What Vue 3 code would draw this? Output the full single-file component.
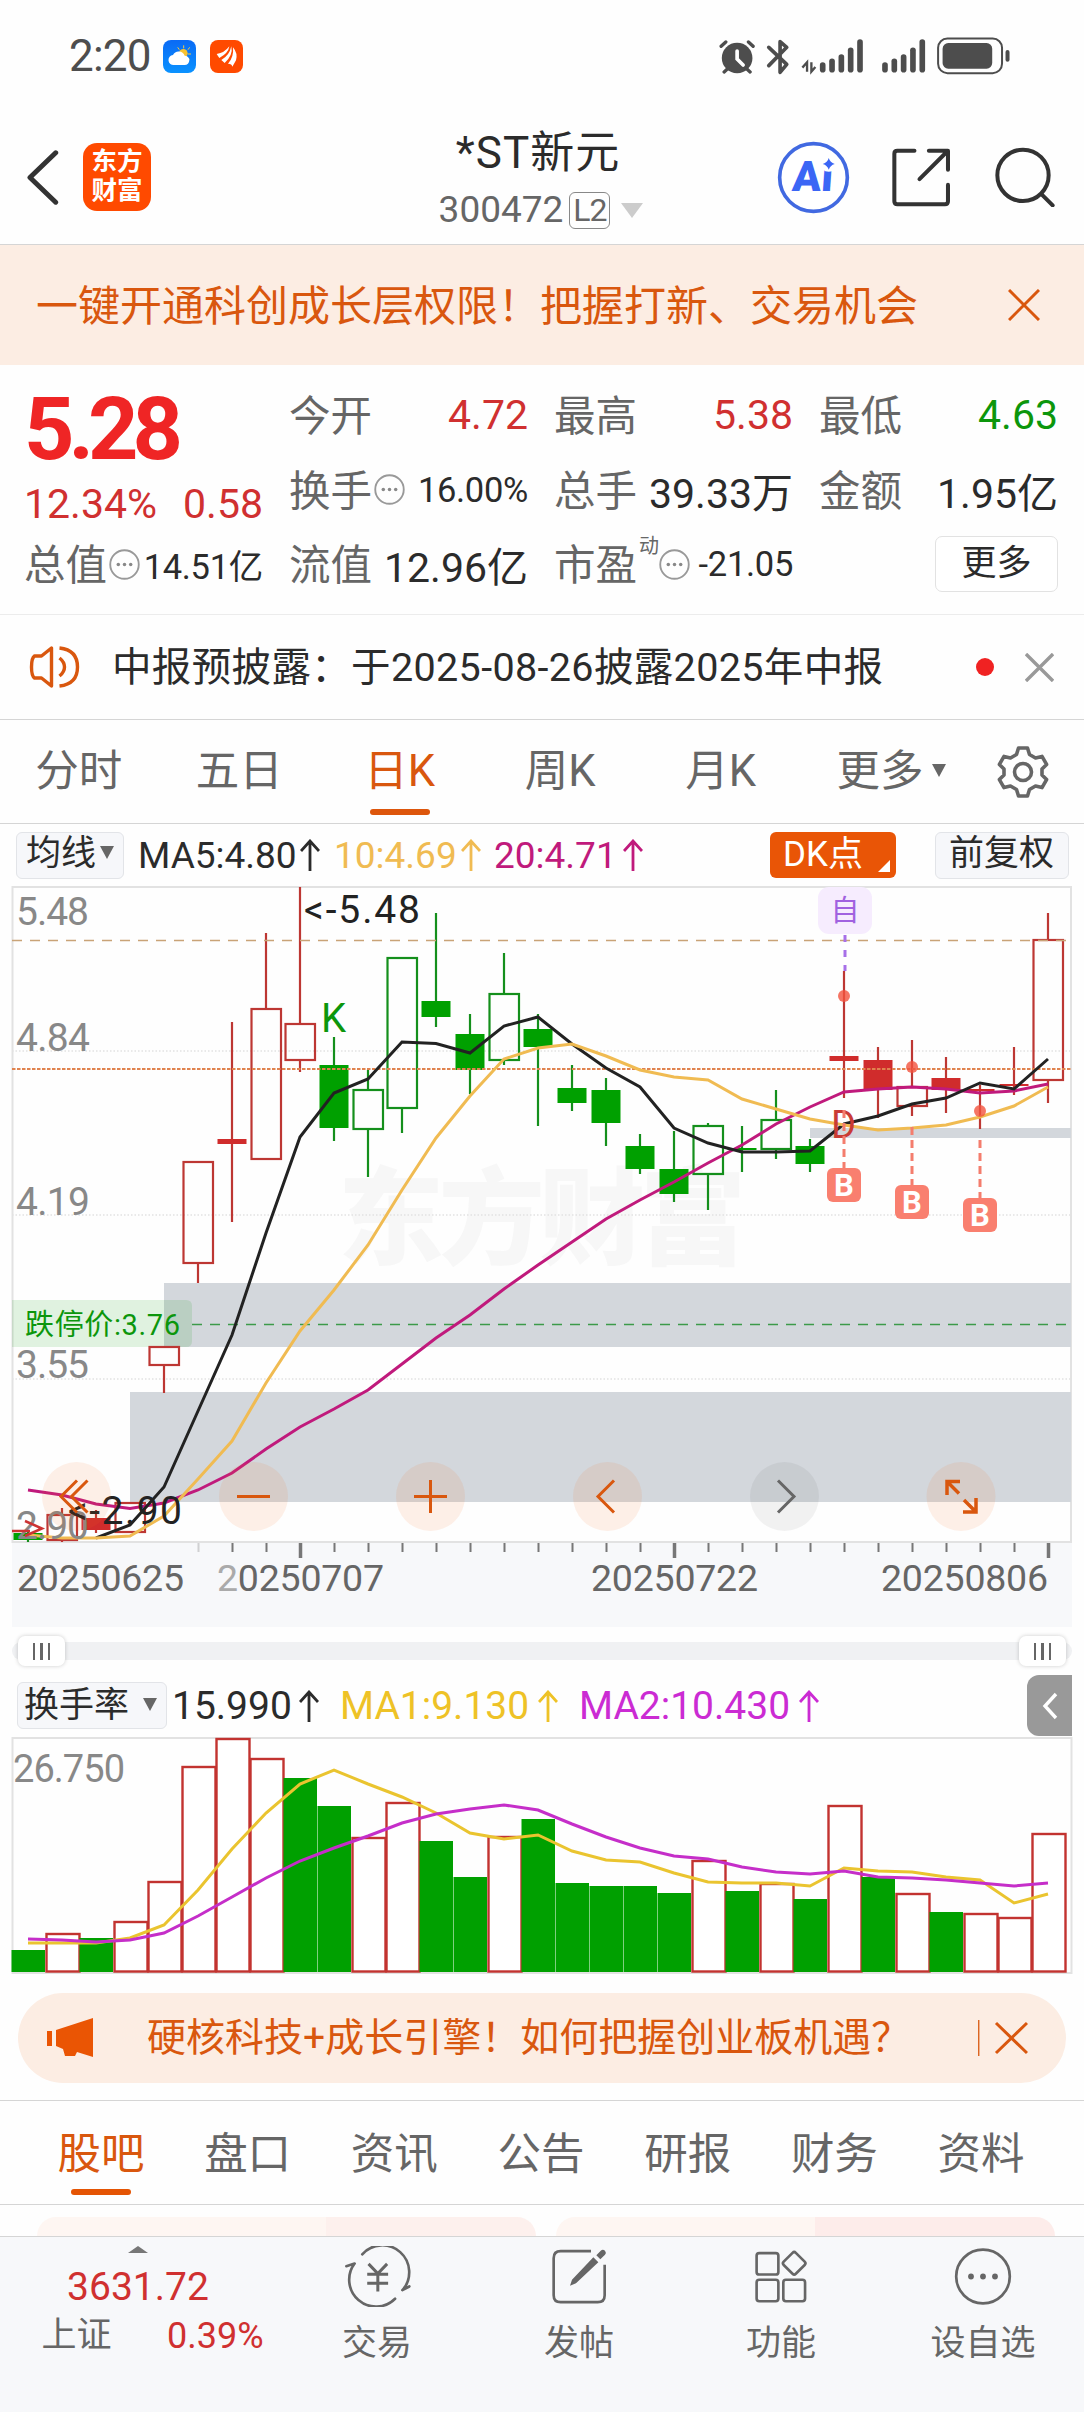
<template>
  <div class="page">
    <!-- Status bar -->
    <div class="status-bar">
      <span class="clock">2:20</span>
      <svg class="app-icon" viewBox="0 0 99 99">
        <defs>
          <linearGradient id="sky" x1="0" y1="0" x2="0" y2="1">
            <stop offset="0" stop-color="#0a6af5" />
            <stop offset="1" stop-color="#0a92ff" />
          </linearGradient>
        </defs>
        <rect width="99" height="99" rx="24" fill="url(#sky)" />
        <path d="M62 16v9M44 22l5 7M80 22l-5 7M84 42h-9M80 58l-5-4" stroke="#f5c842" stroke-width="3" />
        <circle cx="61" cy="40" r="13" fill="#f9c22e" />
        <path d="M33 75a15 15 0 0 1-3-30a19 19 0 0 1 35 2a14 14 0 0 1 0 28z" fill="#fff" />
      </svg>
      <svg class="app-icon second" viewBox="0 0 99 99">
        <rect width="99" height="99" rx="24" fill="#ff4a00" />
        <path d="M20 42Q43 39 58 19Q55 40 28 54ZM34 60Q58 47 64 19Q70 45 44 69ZM54 71Q72 52 69 22Q84 40 78 61L67 80Q66 71 54 71Z" fill="#fff" />
      </svg>
      <svg class="status-icons" viewBox="57 20 873 115">
        <g fill="#4d4d4d">
          <circle cx="111" cy="83" r="46" />
          <path d="M111 62v24l18 18" stroke="#fff" stroke-width="11" fill="none" stroke-linecap="round" />
          <path d="M63 48l14-13M159 48l-14-13M72 125l12-11M150 125l-12-11" stroke="#4d4d4d" stroke-width="10" stroke-linecap="round" />
          <path d="M206 51l54 51-20 24V34l20 17-54 55" stroke="#4d4d4d" stroke-width="11" fill="none" stroke-linecap="round" stroke-linejoin="round" />
          <path d="M321 124V96l-14 16M334 96v28l12-14" stroke="#4d4d4d" stroke-width="7" fill="none" />
        </g>
        <g stroke="#4d4d4d" stroke-width="17" stroke-linecap="round">
          <line v-for="(y, i) in signal" :key="'a' + i" :x1="368 + i * 28" :x2="368 + i * 28" :y1="y" y2="118" />
          <line v-for="(y, i) in signal" :key="'b' + i" :x1="555 + i * 28" :x2="555 + i * 28" :y1="y" y2="118" />
        </g>
        <rect x="714.5" y="24.5" width="192" height="104" rx="28" fill="none" stroke="#4d4d4d" stroke-width="6" />
        <rect x="728" y="38" width="149" height="77" rx="17" fill="#4d4d4d" />
        <rect x="917" y="59" width="12" height="35" rx="6" fill="#4d4d4d" />
      </svg>
    </div>

    <!-- Header -->
    <header class="header">
      <svg class="back" viewBox="0 0 100 166">
        <path d="M90 8L12 83l78 75" fill="none" stroke="#333" stroke-width="15" stroke-linecap="round" stroke-linejoin="round" />
      </svg>
      <div class="logo"><span>东方</span><span>财富</span></div>
      <div class="title">
        <div class="name">*ST新元</div>
        <div class="code">300472<span class="level">L2</span><i class="tri-down light"></i></div>
      </div>
      <svg class="ai" viewBox="228 332 220 220">
        <circle cx="338" cy="442" r="102" fill="#fff" stroke="#4169e1" stroke-width="11" />
        <text x="0" y="0" font-size="127" class="ai-text" textLength="122" lengthAdjust="spacingAndGlyphs" transform="translate(272 482) skewX(-4)">Ai</text>
        <circle cx="384" cy="398" r="27" fill="#fff" />
        <path d="M384 383q4 14 18 18q-14 4-18 18q-4-14-18-18q14-4 18-18z" fill="#3b66f5" />
      </svg>
      <svg class="share" viewBox="574 354 176 176">
        <path d="M641 362H590q-9 0-9 9V513q0 9 9 9H732q9 0 9-9V464M684 362H741V419M737 366L656 447" fill="none" stroke="#333" stroke-width="12" stroke-linecap="round" stroke-linejoin="round" />
      </svg>
      <svg class="search" viewBox="884 348 180 180">
        <circle cx="968" cy="433" r="77" fill="none" stroke="#333" stroke-width="12" />
        <path d="M1024 490l33 33" stroke="#333" stroke-width="12" stroke-linecap="round" />
      </svg>
    </header>

    <!-- Promo banner -->
    <div class="banner">
      <span>一键开通科创成长层权限！把握打新、交易机会</span>
      <svg viewBox="0 0 32 32"><path d="M1 1l30 30M31 1L1 31" stroke="#d9570e" stroke-width="3" /></svg>
    </div>

    <!-- Quote -->
    <section class="quote">
      <div class="price-box">
        <div class="price">5.28</div>
        <div class="change"><span>12.34%</span><span>0.58</span></div>
      </div>
      <div v-for="item in quotes" :key="item.label" class="cell">
        <span class="label">{{ item.label }}<sup v-if="item.sup">{{ item.sup }}</sup></span>
        <svg v-if="item.info" class="info" viewBox="0 0 30 30">
          <circle cx="15" cy="15" r="13.8" fill="none" stroke="#999" stroke-width="1.8" />
          <circle v-for="x in [9, 15, 21]" :key="x" :cx="x" cy="15" r="1.7" fill="#888" />
        </svg>
        <span class="value" :class="[item.color, { small: item.info }]">{{ item.value }}</span>
      </div>
      <div class="cell"><button class="more-button">更多</button></div>
    </section>

    <!-- Notice -->
    <div class="notice">
      <svg class="horn" viewBox="0 0 50 44">
        <g fill="none" stroke="#d9570e" stroke-width="3.400">
          <path d="M22 3v38L12 33H5q-3-2-3-11t3-11h7z" stroke-linejoin="round" />
          <path d="M30 13q5 4 5 9t-5 9M30 3q18 2 18 19T30 41" />
        </g>
      </svg>
      <span class="notice-text">中报预披露：于2025-08-26披露2025年中报</span>
      <i class="dot"></i>
      <svg class="close" viewBox="0 0 30 30"><path d="M1 1l28 28M29 1L1 29" stroke="#999" stroke-width="3.500" /></svg>
    </div>

    <!-- Period tabs -->
    <nav class="period-tabs">
      <span v-for="tab in periods" :key="tab" :class="{ active: tab === '日K' }">{{ tab }}</span>
      <span class="more">更多<i class="tri-down"></i></span>
      <svg class="gear" viewBox="0 0 52 52">
        <g fill="none" stroke="#666" stroke-width="3.6" stroke-linejoin="round">
          <path d="M21.500 2h9l2 6.500 6 3.500 6.500-1.600 4.600 8-4.600 4.600v6l4.600 4.600-4.600 8-6.500-1.600-6 3.500-2 6.500h-9l-2-6.500-6-3.500-6.500 1.600-4.600-8L7 29v-6l-4.600-4.600 4.600-8 6.500 1.600 6-3.500z" />
          <circle cx="26" cy="26" r="8.500" />
        </g>
      </svg>
    </nav>

    <!-- Moving averages -->
    <div class="ma-row">
      <span class="chip">均线<i class="tri-down"></i></span>
      <span class="ma black">MA5:4.80<Arrow /></span>
      <span class="ma yellow">10:4.69<Arrow /></span>
      <span class="ma pink">20:4.71<Arrow /></span>
      <span class="chip dk">DK点<i></i></span>
      <span class="chip adjust">前复权</span>
    </div>

    <!-- Candlestick chart -->
    <svg class="chart" viewBox="0 886 1084 742" width="1084" height="742">
      <rect x="12" y="1543" width="1060" height="84" fill="#f7f8fa" />
      <g class="watermark"><text x="338" y="1256" textLength="408">东方财富</text></g>
      <g stroke="#e2e2e2" stroke-width="1.500" stroke-dasharray="1.500 2">
        <line v-for="y in [1051, 1215, 1379]" :key="y" x1="12" x2="1071" :y1="y" :y2="y" />
      </g>
      <path d="M12.500 1542V887H1071V1542Z" fill="none" stroke="#e2e2e2" stroke-width="2" />
      <g fill="#d3d7dc">
        <rect x="164" y="1283" width="907" height="64" />
        <rect x="130" y="1392" width="941" height="110" />
        <rect x="810" y="1128" width="261" height="10" />
      </g>
      <line x1="192" x2="1071" y1="1324.500" y2="1324.500" stroke="#3c9a4a" stroke-width="1.500" stroke-dasharray="10 8" />
      <path d="M12 1300H186q6 0 6 6V1341q0 6-6 6H12z" fill="#0ca00c" fill-opacity=".12" />
      <text x="25" y="1335" font-size="29" fill="#0c960c" textLength="155">跌停价:3.76</text>

      <g v-for="(c, i) in candles" :key="'c' + i" :stroke="candleColor(c)" stroke-width="2.200">
        <template v-if="c[0] === 'R' || c[0] === 'G'">
          <line :x1="cx(i)" :x2="cx(i)" :y1="c[3]" :y2="c[4]" />
          <rect :x="cx(i) - 14.5" :y="c[1]" width="29" :height="c[2] - c[1]" :fill="c[0] === 'R' ? '#d02c2c' : '#00a000'" stroke="none" />
        </template>
        <template v-else>
          <path :d="`M${cx(i)} ${c[3]}V${c[1]}M${cx(i)} ${c[2]}V${c[4]}`" />
          <rect :x="cx(i) - 14.5" :y="c[1] + 1" width="29.5" :height="Math.max(c[2] - c[1] - 2, 0.1)" fill="none" />
        </template>
      </g>

      <line x1="12" x2="1071" y1="940.500" y2="940.500" stroke="#c9a377" stroke-width="1.300" stroke-dasharray="10 8" />
      <line x1="12" x2="1071" y1="1069" y2="1069" stroke="#e0834f" stroke-width="1.800" stroke-dasharray="3.500 1.500" />

      <g fill="none" stroke-width="3">
        <polyline :points="points(ma20)" stroke="#c01a7c" />
        <polyline :points="points(ma5, 2)" stroke="#222" />
        <polyline :points="points(ma10)" stroke="#f0bb52" />
      </g>

      <g class="axis">
        <text x="16" y="925" textLength="73">5.48</text>
        <text x="16" y="1051" textLength="74">4.84</text>
        <text x="16" y="1215" textLength="74">4.19</text>
        <text x="16" y="1378" textLength="73">3.55</text>
        <text x="16" y="1539" textLength="73">2.90</text>
      </g>
      <text x="304" y="923" font-size="39" fill="#222" textLength="116">&lt;-5.48</text>
      <text x="68" y="1524" font-size="39" fill="#222" textLength="114">&lt;-2.90</text>
      <path d="M25 1521l17 7.500-17 7.500M12 1531h18" fill="none" stroke="#c33" stroke-width="2.500" />
      <text x="321" y="1031.500" font-size="40" fill="#0c960c">K</text>
      <text x="831" y="1138" font-size="38" fill="#c93b35">D</text>

      <g v-for="m in marks" :key="m.x">
        <circle :cx="m.x" :cy="m.dot" r="6" fill="#f2523d" fill-opacity=".8" />
        <line :x1="m.x" :x2="m.x" :y1="m.line" :y2="m.box" stroke="#f47d6d" stroke-width="3" stroke-dasharray="8 5" />
        <rect :x="m.x - 17" :y="m.box" width="34" height="34" rx="6" fill="#f97f6f" />
        <text :x="m.x" :y="m.box + 28" font-size="31" font-weight="700" fill="#fff" text-anchor="middle">B</text>
      </g>

      <rect x="818" y="887" width="54" height="47" rx="11" fill="#f6ecfe" />
      <text x="845" y="921" font-size="29" fill="#a162e0" text-anchor="middle">自</text>
      <line x1="845" x2="845" y1="935" y2="971" stroke="#a770e8" stroke-width="3" stroke-dasharray="7 8" />

      <!-- Floating chart controls -->
      <circle v-for="(x, i) in controls" :key="x" :cx="x" cy="1496.500" r="34.500" :fill="i === 4 ? '#000' : '#f26a1b'" :fill-opacity="i === 4 ? 0.05 : 0.1" />
      <g fill="none" stroke="#d9570e" stroke-width="3">
        <path d="M77 1480.500l-16 16 16 16M87.500 1480.500l-16 16 16 16" />
        <path d="M237 1496.500h33M414 1496.500h33M430.500 1480v33" />
        <path d="M614 1480.500l-16 16 16 16" />
        <path d="M778 1480.500l16 16-16 16" stroke="#666" />
        <path d="M947 1495v-13.500h13M947 1481.500l12 12M963 1512h13V1498M976 1512l-12-12" stroke-width="3.500" />
      </g>

      <g stroke="#777">
        <line v-for="i in 26" :key="i" :x1="cx(i + 4) + 0.5" :x2="cx(i + 4) + 0.5" y1="1543" :y2="major(i + 4) ? 1558 : 1552" :stroke-width="major(i + 4) ? 3.5 : 2" :opacity="i === 1 ? 0.3 : 1" />
      </g>
      <g class="dates">
        <text x="17" y="1591" textLength="167">20250625</text>
        <text x="217" y="1591" textLength="167"><tspan fill="#aaa">2</tspan>0250707</text>
        <text x="591" y="1591" textLength="167">20250722</text>
        <text x="881" y="1591" textLength="167">20250806</text>
      </g>
    </svg>

    <!-- Range slider -->
    <div class="slider">
      <div class="track">
        <span class="handle"><i></i><i></i><i></i></span>
        <span class="handle"><i></i><i></i><i></i></span>
      </div>
    </div>

    <!-- Turnover -->
    <div class="volume-row">
      <span class="chip turnover">换手率<i class="tri-down"></i></span>
      <span class="ma black">15.990<Arrow /></span>
      <span class="ma gold">MA1:9.130<Arrow /></span>
      <span class="ma purple">MA2:10.430<Arrow /></span>
      <span class="collapse">
        <svg viewBox="0 0 16 28"><path d="M14 2L3 14l11 12" fill="none" stroke="#fff" stroke-width="3.400" /></svg>
      </span>
    </div>
    <svg class="volume" viewBox="0 1737 1084 238" width="1084" height="238">
      <rect x="12.500" y="1738" width="1059" height="235" fill="none" stroke="#e2e2e2" stroke-width="2" />
      <template v-for="(v, i) in volumes" :key="'v' + i">
        <rect v-if="v[0] === 'g'" :x="11.500 + i * 34" :y="v[1]" width="33.500" :height="1972 - v[1]" fill="#00a000" />
        <rect v-else :x="12.500 + i * 34" :y="v[1] + 1" width="33" :height="1970.500 - v[1]" fill="#fff" stroke="#c23330" stroke-width="2.400" />
      </template>
      <text x="13" y="1782" font-size="38" fill="#888" textLength="112">26.750</text>
      <g fill="none" stroke-width="3">
        <polyline :points="points(vol1)" stroke="#eac42f" />
        <polyline :points="points(vol2)" stroke="#c52ec9" />
      </g>
    </svg>

    <!-- Promo pill -->
    <div class="promo">
      <svg class="megaphone" viewBox="0 0 48 40">
        <path d="M0 13h5v15H0zM9 12L46 0v39l-16-5-2 4H18l-2-7-7-3z" fill="#ea5504" />
      </svg>
      <span class="promo-text">硬核科技+成长引擎！如何把握创业板机遇？</span>
      <svg class="promo-close" viewBox="0 0 50 36">
        <path d="M.75 0v36" stroke="#d9570e" stroke-width="1.300" />
        <path d="M18 3l31 30M49 3L18 33" stroke="#d9570e" stroke-width="3" />
      </svg>
    </div>

    <!-- Info tabs -->
    <nav class="info-tabs">
      <span v-for="tab in infoTabs" :key="tab" :class="{ active: tab === '股吧' }">{{ tab }}</span>
    </nav>
    <div class="cards"><div></div><div></div></div>

    <!-- Bottom bar -->
    <footer class="bottom-bar">
      <div class="index">
        <i class="tri-up"></i>
        <div class="index-value">3631.72</div>
        <div class="index-change"><span>上证</span><b>0.39%</b></div>
      </div>
      <div class="action">
        <svg viewBox="38 46 202 182" width="67" height="61">
          <g fill="none" stroke="#666" stroke-width="8" stroke-linecap="round">
            <path d="M93 70A81 81 0 0 1 214 178L235 167M192 204A81 81 0 0 1 70 98L45 106" stroke-linejoin="round" />
            <path d="M112 99l28 29 28-29M108 130h63M108 157h63M140 129v53" stroke-linecap="butt" stroke-width="9" />
          </g>
        </svg>
        <span>交易</span>
      </div>
      <div class="action">
        <svg viewBox="660 46 174 182" width="58" height="61">
          <path d="M783 61H692q-21 0-21 21V193q0 21 21 21H803q21 0 21-21V102" fill="none" stroke="#666" stroke-width="8" />
          <path d="M790 79l15 15-67 63-18 8 6-18zM799 73l14-14q6-5 12 1 5 6 0 12l-14 13z" fill="#666" />
        </svg>
        <span>发帖</span>
      </div>
      <div class="action">
        <svg viewBox="1266 46 176 182" width="58" height="61">
          <g fill="none" stroke="#666" stroke-width="8">
            <rect x="1280" y="66" width="66" height="65" rx="8" />
            <rect x="1280" y="147" width="66" height="65" rx="8" />
            <rect x="1361" y="147" width="66" height="65" rx="8" />
            <rect x="1368" y="71" width="52" height="52" rx="7" transform="rotate(45 1394 97)" />
          </g>
        </svg>
        <span>功能</span>
      </div>
      <div class="action">
        <svg viewBox="0 0 60 61" width="60" height="61">
          <circle cx="30" cy="30.500" r="26.800" fill="none" stroke="#666" stroke-width="2.700" />
          <circle v-for="x in [18, 30, 42]" :key="x" :cx="x" cy="30.500" r="2.900" fill="#666" />
        </svg>
        <span>设自选</span>
      </div>
    </footer>
  </div>
</template>

<script setup>
import { h } from 'vue'

// Thin up arrow drawn after each average
const Arrow = () =>
  h('svg', { class: 'arrow', viewBox: '0 0 20 32', width: 20, height: 32 }, [
    h('path', { d: 'M10 32V2M1 12L10 2L19 12', fill: 'none', stroke: 'currentColor', 'stroke-width': 2.8 })
  ])

const signal = [104, 93, 80, 60, 35]

const quotes = [
  { label: '今开', value: '4.72', color: 'red' },
  { label: '最高', value: '5.38', color: 'red' },
  { label: '最低', value: '4.63', color: 'green' },
  { label: '换手', value: '16.00%', info: true },
  { label: '总手', value: '39.33万' },
  { label: '金额', value: '1.95亿' },
  { label: '总值', value: '14.51亿', info: true },
  { label: '流值', value: '12.96亿' },
  { label: '市盈', value: '-21.05', info: true, sup: '动' }
]

const periods = ['分时', '五日', '日K', '周K', '月K']
const infoTabs = ['股吧', '盘口', '资讯', '公告', '研报', '财务', '资料']
const controls = [76.5, 253.5, 430.5, 607.5, 784.5, 961]

// [type, body top, body bottom, wick top, wick bottom]
// upper case = filled, lower case = hollow
const candles = [
  ['G', 1533, 1540, 1530, 1542],
  ['r', 1514, 1541, 1508, 1542],
  ['R', 1518, 1530, 1510, 1533],
  ['r', 1502, 1533, 1502, 1533],
  ['r', 1346, 1366, 1346, 1393],
  ['r', 1161, 1264, 1161, 1283],
  ['R', 1139, 1144, 1022, 1222],
  ['r', 1008, 1160, 933, 1160],
  ['r', 1023, 1061, 887, 1072],
  ['G', 1065, 1128, 1037, 1141],
  ['g', 1089, 1130, 1070, 1177],
  ['g', 957, 1109, 957, 1133],
  ['G', 1001, 1017, 913, 1027],
  ['G', 1034, 1070, 1014, 1094],
  ['g', 993, 1061, 953, 1065],
  ['G', 1029, 1047, 1014, 1126],
  ['G', 1088, 1103, 1065, 1111],
  ['G', 1090, 1123, 1078, 1146],
  ['G', 1146, 1169, 1134, 1174],
  ['G', 1169, 1194, 1131, 1202],
  ['g', 1125, 1175, 1123, 1210],
  ['G', 1148, 1150, 1126, 1172],
  ['g', 1119, 1150, 1090, 1159],
  ['G', 1146, 1164, 1139, 1172],
  ['R', 1056, 1061, 971, 1098],
  ['R', 1060, 1090, 1047, 1118],
  ['r', 1086, 1107, 1040, 1116],
  ['R', 1078, 1090, 1057, 1113],
  ['R', 1089, 1091, 1085, 1129],
  ['R', 1084, 1086, 1047, 1095],
  ['r', 939, 1081, 913, 1103]
]

const ma5 = [1538, 1525, 1487, 1411, 1335, 1233, 1137, 1093, 1079, 1042, 1043.500, 1053, 1026, 1017, 1044, 1068, 1087, 1128, 1143, 1152, 1152, 1151, 1124, 1116, 1104, 1098, 1083, 1089, 1059]
const ma10 = [1535, 1538, 1538, 1536, 1516, 1479, 1441, 1383, 1331, 1290, 1245, 1190, 1138, 1096, 1059, 1048, 1044, 1056, 1070, 1077, 1080, 1099, 1109, 1119, 1125, 1130, 1128, 1125, 1117, 1106, 1087]
const ma20 = [1490, 1495, 1504, 1508.500, 1503, 1490, 1473, 1449, 1427, 1409, 1390, 1364, 1338, 1315, 1289, 1265, 1242, 1219, 1200, 1182, 1163, 1145, 1124, 1107, 1092, 1089, 1087, 1089, 1093, 1091, 1084]

const marks = [
  { x: 844, dot: 996, line: 1110, box: 1168 },
  { x: 912, dot: 1067, line: 1127, box: 1185 },
  { x: 980, dot: 1111, line: 1140, box: 1198 }
]

const volumes = [
  ['g', 1950], ['r', 1933], ['g', 1938], ['r', 1921], ['r', 1881], ['r', 1766], ['r', 1738], ['r', 1758],
  ['g', 1778], ['g', 1806], ['r', 1837], ['r', 1802], ['g', 1841], ['g', 1877], ['r', 1836], ['g', 1819],
  ['g', 1883], ['g', 1886], ['g', 1886], ['g', 1893], ['r', 1860], ['g', 1891], ['r', 1883], ['g', 1899],
  ['r', 1805], ['g', 1877], ['r', 1893], ['g', 1912], ['r', 1913], ['r', 1917], ['r', 1833]
]
const vol1 = [1943, 1943, 1943, 1938, 1925, 1890, 1849, 1813, 1784, 1770, 1784, 1797, 1813, 1833, 1839, 1835, 1851, 1860, 1862, 1873, 1882, 1883, 1883, 1886, 1868, 1871, 1872, 1877, 1880, 1903, 1894]
const vol2 = [1939, 1940, 1942, 1940, 1933, 1916, 1897, 1878, 1861, 1848, 1836, 1823, 1814, 1809, 1805, 1810, 1824, 1837, 1848, 1856, 1859, 1867, 1872, 1874, 1871, 1877, 1878, 1880, 1883, 1886, 1883]

const cx = (i) => 28 + i * 34
const major = (i) => [8, 19, 30].includes(i)
const points = (list, start = 0) => list.map((y, i) => `${cx(i + start)},${y}`).join(' ')
const candleColor = (c) => (c[0].toLowerCase() === 'r' ? '#bd3733' : '#148f1c')
</script>

<style>
body {
  background: #fff;
}
</style>

<style scoped>
.page {
  width: 1084px;
  height: 2412px;
  overflow: hidden;
  background: #fefefe;
  color: #2b2b2b;
  font-family: Roboto, "Noto Sans CJK SC", sans-serif;
  box-sizing: border-box;
}

.page * {
  box-sizing: border-box;
}

svg {
  display: block;
  flex: none;
}

span {
  white-space: nowrap;
}

.status-bar {
  height: 110px;
  padding: 2px 74px 0 69px;
  display: flex;
  align-items: center;
}

.clock {
  width: 94px;
  font-size: 44px;
  letter-spacing: -0.800px;
  color: #4d4d4d;
}

.app-icon {
  width: 33px;
  height: 33px;
}

.app-icon.second {
  margin-left: 14px;
}

.status-icons {
  width: 291px;
  height: 38.300px;
  margin-left: auto;
}

.header {
  height: 135px;
  display: flex;
  align-items: center;
  border-bottom: 1.500px solid #d5d5d5;
  padding: 0 29px 0 26px;
}

.back {
  width: 33px;
  height: 55px;
}

.logo {
  margin-left: 24px;
  width: 68px;
  height: 68px;
  border-radius: 14px;
  background: #ff4a00;
  color: #fff;
  display: flex;
  flex-direction: column;
  align-items: center;
  justify-content: center;
  font-size: 25.500px;
  font-weight: 700;
  line-height: 29px;
  padding-bottom: 2px;
}

.title {
  flex: 1;
  padding: 4px 0 0 148px;
  text-align: center;
}

.name {
  font-size: 44px;
  line-height: 62px;
  letter-spacing: 1px;
}

.code {
  display: flex;
  justify-content: center;
  align-items: center;
  font-size: 37px;
  line-height: 52px;
  color: #666;
  padding-left: 6px;
}

.level {
  margin: 0 11px 0 6px;
  height: 37px;
  width: 41px;
  border: 1.500px solid #888;
  border-radius: 6px;
  font-size: 32px;
  line-height: 35px;
  letter-spacing: -1px;
}

.tri-down {
  display: inline-block;
  border: 7px solid transparent;
  border-top: 13px solid #666;
  border-bottom: 0;
}

.tri-down.light {
  border-width: 15px 11px 0;
  border-top-color: #ccc;
}

.ai {
  width: 73px;
  height: 73px;
}

.ai-text {
  font-family: Roboto, sans-serif;
  font-weight: 900;
  fill: #3b66f5;
}

.share {
  width: 59px;
  height: 59px;
  margin: 0 44px 0 42px;
}

.search {
  width: 60px;
  height: 60px;
}

.banner {
  height: 120px;
  background: #fcede3;
  color: #d9570e;
  display: flex;
  align-items: center;
  justify-content: space-between;
  padding: 0 44px 0 36px;
  font-size: 42px;
}

.banner span {
  padding-bottom: 6px;
}

.banner svg {
  width: 32px;
  height: 32px;
}

.quote {
  height: 250px;
  padding: 13px 0 0 24px;
  display: grid;
  grid-template-columns: repeat(4, 239px);
  grid-template-rows: repeat(3, 74.500px);
  column-gap: 26px;
  border-bottom: 1.500px solid #ececec;
}

.price-box {
  grid-row: span 2;
}

.price {
  padding-top: 1px;
  font-size: 88px;
  line-height: 100px;
  font-weight: 700;
  letter-spacing: -6px;
  color: #ef2525;
}

.change {
  display: flex;
  justify-content: space-between;
  font-size: 41px;
  line-height: 50px;
  color: #d03030;
}

.cell {
  display: flex;
  align-items: center;
}

.label {
  position: relative;
  padding-bottom: 4px;
  font-size: 41.500px;
  color: #666;
}

.label sup {
  position: absolute;
  left: 85px;
  top: -2px;
  font-size: 20px;
}

.info {
  width: 31px;
  height: 31px;
  margin-left: 2px;
}

.label:has(sup) + .info {
  margin-left: 22px;
}

.value {
  margin-left: auto;
  font-size: 41px;
}

.value.small {
  font-size: 34.500px;
  letter-spacing: -0.300px;
}

.value.red {
  color: #d03030;
}

.value.green {
  color: #0c960c;
}

.more-button {
  margin-left: auto;
  width: 123px;
  height: 56px;
  border: 1.500px solid #e2e2e2;
  border-radius: 7px;
  background: #fff;
  color: #2b2b2b;
  font: inherit;
  font-size: 35px;
  line-height: 50px;
  padding: 0;
}

.notice {
  height: 105px;
  display: flex;
  align-items: center;
  padding: 0 30px 0 29px;
  border-bottom: 1.500px solid #d5d5d5;
}

.horn {
  width: 51px;
  height: 44px;
}

.notice-text {
  margin-left: 32px;
  padding-bottom: 8px;
  font-size: 39.500px;
  letter-spacing: 0.350px;
}

.dot {
  margin-left: auto;
  margin-right: 31px;
  width: 18px;
  height: 18px;
  border-radius: 50%;
  background: #f02222;
}

.close {
  width: 29px;
  height: 29px;
}

.period-tabs {
  height: 104px;
  display: flex;
  align-items: center;
  border-bottom: 1.500px solid #d5d5d5;
  font-size: 43.500px;
  color: #666;
}

.period-tabs span {
  position: relative;
  left: -1.500px;
  width: 160.500px;
  line-height: 104px;
  text-align: center;
}

.active {
  color: #d9570e;
}

.period-tabs .active::after {
  content: "";
  position: absolute;
  left: 50px;
  bottom: 9px;
  width: 60px;
  height: 6px;
  border-radius: 3px;
  background: #dd560c;
}

.period-tabs .more {
  width: 150px;
  margin-left: 15px;
}

.more .tri-down {
  margin-left: 8px;
  vertical-align: 9px;
}

.gear {
  width: 52px;
  height: 52px;
  margin-left: 29px;
}

.ma-row {
  height: 62px;
  display: flex;
  align-items: center;
  padding: 0 15px 0 16px;
}

.chip {
  height: 47px;
  width: 108px;
  border: 1.500px solid #e2e4e8;
  border-radius: 6px;
  background: #f6f7fa;
  font-size: 35px;
  line-height: 42px;
  padding-left: 9px;
}

.chip .tri-down {
  margin-left: 4px;
  vertical-align: 6px;
}

.ma {
  display: inline-flex;
  align-items: center;
  font-size: 37px;
  margin-left: 14px;
}

.ma-row .ma {
  width: 182px;
}

.arrow {
  margin-left: auto;
}

.ma-row .ma.yellow {
  width: 147px;
  color: #f0bb52;
}

.ma-row .ma.pink {
  width: 149px;
  margin-left: 13px;
  color: #c01a7c;
}

.chip.dk {
  position: relative;
  width: 126px;
  height: 46px;
  margin-left: auto;
  border: 0;
  padding-left: 13px;
  background: #e95506;
  color: #fff;
  line-height: 45px;
}

.dk i {
  position: absolute;
  right: 6px;
  bottom: 6px;
  border-left: 12px solid transparent;
  border-bottom: 12px solid #fff;
}

.chip.adjust {
  width: 134px;
  margin-left: 39px;
  padding-left: 13px;
}

.chart text {
  font-family: Roboto, "Noto Sans CJK SC", sans-serif;
}

.watermark text {
  font-size: 106px;
  font-weight: 900;
  fill: #f7f7f7;
}

.axis text {
  font-size: 39px;
  fill: #888;
}

.dates text {
  font-size: 37.500px;
  fill: #666;
}

.slider {
  height: 46px;
  padding: 14px 12px 0;
}

.track {
  height: 18px;
  border-radius: 9px;
  background: #f0f1f3;
  display: flex;
  align-items: center;
  justify-content: space-between;
  padding: 0 6px;
}

.handle {
  width: 47px;
  height: 30px;
  border-radius: 7px;
  background: #fff;
  box-shadow: 0 0 4px rgba(0, 0, 0, 0.2);
  display: flex;
  align-items: center;
  justify-content: center;
  gap: 5px;
}

.handle i {
  width: 2.500px;
  height: 17px;
  background: #666;
}

.volume-row {
  height: 63px;
  display: flex;
  align-items: center;
  padding: 0 12px 0 17px;
}

.chip.turnover {
  width: 150px;
  padding-left: 6px;
  line-height: 45px;
}

.turnover .tri-down {
  margin-left: 14px;
}

.volume-row .ma {
  font-size: 39px;
  width: 147px;
  margin-left: 5px;
}

.volume-row .ma.gold {
  width: 218px;
  margin-left: 21px;
  color: #eec226;
}

.volume-row .ma.purple {
  width: 240px;
  margin-left: 21px;
  color: #cb2bd3;
}

.collapse {
  margin-left: auto;
  width: 45px;
  height: 61px;
  border-radius: 12px 0 0 12px;
  background: #999;
  display: flex;
  align-items: center;
  justify-content: center;
}

.collapse svg {
  width: 16px;
  height: 28px;
}

.promo {
  height: 90px;
  margin: 18px 18px 0;
  border-radius: 45px;
  background: #fcede3;
  color: #d9570e;
  display: flex;
  align-items: center;
  padding: 0 38px 0 29px;
}

.megaphone {
  width: 48px;
  height: 40px;
}

.promo-text {
  margin-left: 52px;
  padding-bottom: 8px;
  font-size: 39px;
}

.promo-close {
  width: 50px;
  height: 36px;
  margin-left: auto;
}

.info-tabs {
  height: 105px;
  margin-top: 17px;
  display: flex;
  justify-content: center;
  padding-right: 2px;
  border-top: 1.500px solid #d5d5d5;
  border-bottom: 1.500px solid #d5d5d5;
  font-size: 43.500px;
  color: #666;
}

.info-tabs span {
  position: relative;
  width: 146.700px;
  line-height: 107px;
  text-align: center;
}

.info-tabs .active {
  color: #d9570e;
}

.info-tabs .active::after {
  content: "";
  position: absolute;
  left: 43px;
  top: 88px;
  width: 60px;
  height: 6px;
  border-radius: 3px;
  background: #e45404;
}

.cards {
  height: 31px;
  padding: 12px 29px 0 37px;
  display: flex;
  gap: 20px;
}

.cards div {
  flex: 1;
  border-radius: 24px 24px 0 0;
  background: linear-gradient(90deg, #fef6f2 0 58%, #fdf0ed 58%);
}

.cards div + div {
  background: linear-gradient(90deg, #fef6f2 0 52%, #fdecea 52%);
}

.bottom-bar {
  height: 177px;
  display: flex;
  background: #f7f8fa;
  border-top: 1.500px solid #d5d5d5;
}

.index {
  width: 276px;
  display: flex;
  flex-direction: column;
  align-items: center;
  color: #d03030;
  padding-top: 9px;
}

.tri-up {
  border: 10px solid transparent;
  border-bottom: 7px solid #777;
  border-top: 0;
}

.index-value {
  margin-top: 8px;
  font-size: 39px;
  line-height: 52px;
}

.index-change {
  width: 222px;
  margin-left: 29px;
  display: flex;
  justify-content: space-between;
  font-size: 36px;
  line-height: 46px;
}

.index-change span {
  font-size: 35px;
  color: #666;
}

.index-change b {
  font-weight: 400;
}

.action {
  width: 202px;
  display: flex;
  flex-direction: column;
  align-items: center;
  padding-top: 9px;
  font-size: 35px;
  line-height: 50px;
  color: #666;
}

.action span {
  margin-top: 12px;
}
</style>
